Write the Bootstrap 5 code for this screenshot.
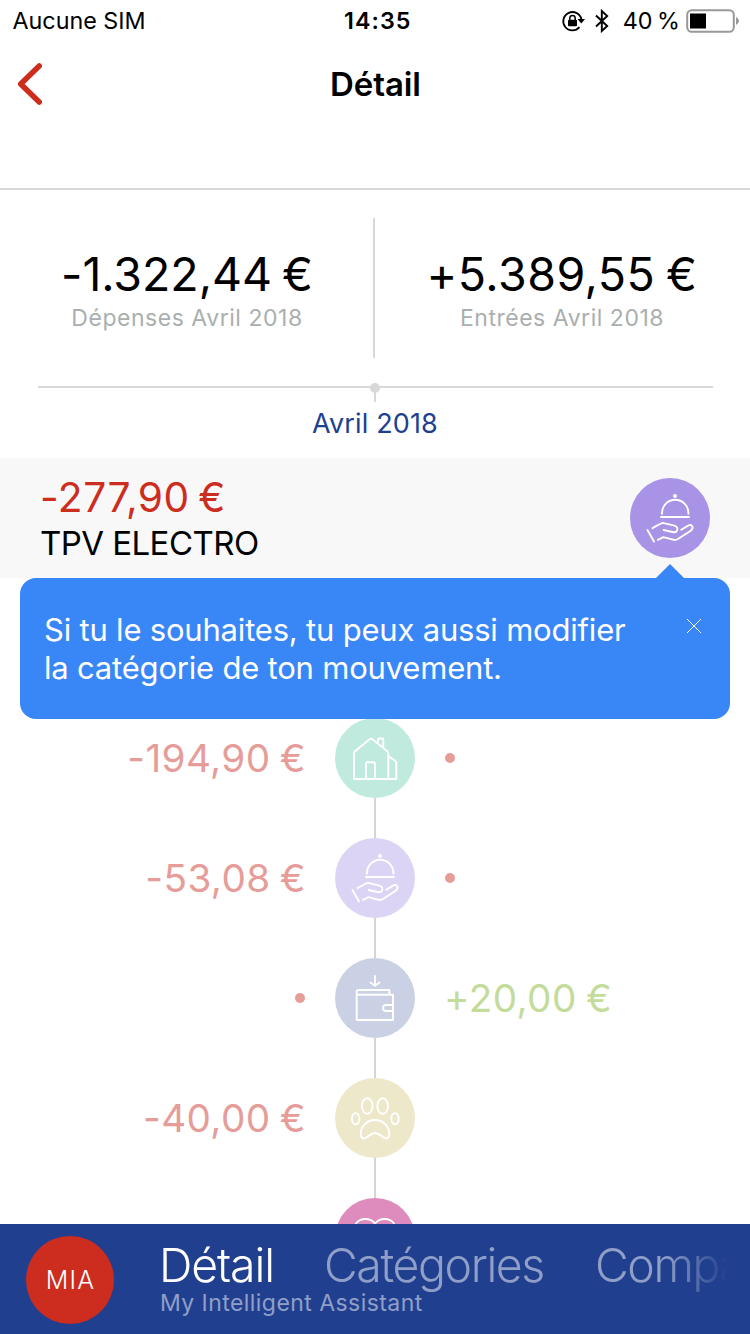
<!DOCTYPE html>
<html lang="fr">
<head>
<meta charset="utf-8">
<meta name="viewport" content="width=device-width, initial-scale=1">
<title>Détail</title>
<link href="https://cdn.jsdelivr.net/npm/bootstrap@5.3.0/dist/css/bootstrap.min.css" rel="stylesheet">
<style>
  body { font-family: Inter, "Liberation Sans", sans-serif; color: #000; background: #fff; }
  .screen { width: 750px; height: 1334px; }
  .ico { fill: none; stroke: #fff; stroke-width: 1.9; stroke-linecap: round; stroke-linejoin: round; }

  .status { height: 41px; font-size: 23.3px; line-height: 41px; padding: 0 10px 0 12.500px; }
  .status .clock { font-weight: 600; letter-spacing: 1px; padding-left: 3px; }
  .status .level { letter-spacing: 0; word-spacing: -2px; }
  .status > * { flex: 1 1 0; }
  .battery { width: 54px; height: 24px; margin-left: 6px; }

  .titlebar { height: 149px; border-bottom: 2px solid #d8d8d8; }
  .titlebar .back { width: 30px; margin-left: 15px; }
  .titlebar .bar-row { height: 85px; }
  .titlebar h1 { font-size: 33px; line-height: 40px; font-weight: 600; letter-spacing: -.1px; padding-right: 44px; }

  .totals { height: 196px; padding-top: 28px; }
  .totals .split { width: 2px; height: 140px; background: #d8d8d8; margin: 0 -1px; }
  .totals .total { width: 374px; padding-top: 28px; }
  .sum { font-size: 46.5px; line-height: 56px; word-spacing: -3px; }
  .sum.spent { letter-spacing: -.05px; }
  .sum.earned { letter-spacing: .5px; }
  .caption-text { font-size: 23px; line-height: 32px; color: #a9afae; letter-spacing: .53px; }

  .month { height: 72px; }
  .month .rule { height: 2px; background: #d8d8d8; margin: 0 37px 0 38px; }
  .month .knob { width: 10px; height: 10px; top: -3px; left: 370px; background: #d8d8d8; }
  .month .stem { width: 2px; height: 14px; background: #d8d8d8; }
  .month .label { font-size: 27px; line-height: 43px; color: #213f8f; letter-spacing: .14px; }

  .movement { height: 120px; background: #f8f8f8; padding: 0 40px; }
  .movement .amount { font-size: 40.7px; line-height: 47px; color: #cc2d1f; letter-spacing: .5px; word-spacing: -3.500px; }
  .movement .name { font-size: 33px; line-height: 45px; letter-spacing: -.55px; }
  .disc { width: 80px; height: 80px; flex: none; }

  .tip { height: 141px; margin: 0 20px; border-radius: 16px; background: #3986f7; color: #fff; padding: 33px 28px 0 24px; z-index: 2; }
  .tip p { font-size: 31px; line-height: 38px; letter-spacing: -.2px; }
  .tip .arrow { width: 28px; height: 15px; top: -14px; left: 636px; }
  .tip .close-x { width: 16px; height: 16px; margin-top: 7px; }

  .timeline { height: 506px; margin-top: -1px; }
  .entry { height: 80px; font-size: 38.7px; line-height: 80px; color: #e69d99; word-spacing: -2px; letter-spacing: .4px; }
  .entry > .side { width: 335px; flex: none; }
  .entry .out { text-align: right; padding-right: 29px; }
  .entry .in { padding-left: 29px; color: #c4dc9b; }
  .link-line { width: 2px; height: 40px; background: #d5d5d5; margin: 0 auto; }
  .bullet { width: 10px; height: 10px; background: #e69d99; margin: 0 30px; }

  .dock { height: 110px; background: #213f8f; color: #fff; padding: 0 20px 0 26px; z-index: 3; }
  .mia { width: 88px; height: 88px; background: #cc2d1f; font-size: 25px; font-weight: 300; letter-spacing: 1.2px; margin-top: 2px; padding: 2px 0 0 1px; }
  .menu { margin-left: 45px; padding-top: 13px; width: 571px; }
  .tabs { height: 56px; font-size: 46.4px; line-height: 56px; font-weight: 300; letter-spacing: -1.400px;
    -webkit-mask-image: linear-gradient(90deg, #000 505px, transparent 569px); mask-image: linear-gradient(90deg, #000 505px, transparent 569px); }
  .tabs span { color: #909fc7; width: 271px; flex: none; }
  .tabs .current { color: #fff; letter-spacing: -1.1px; width: 165px; }
  .tagline { font-size: 23px; line-height: 28px; color: #909fc7; letter-spacing: .44px; margin: -4px 0 0 1px; }
</style>
</head>
<body>
<div class="screen d-flex flex-column overflow-hidden position-relative">

  <div class="status d-flex align-items-center flex-shrink-0">
    <span>Aucune SIM</span>
    <span class="clock text-center">14:35</span>
    <div class="d-flex align-items-center justify-content-end">
      <svg width="24" height="24" viewBox="0 0 24 24" class="me-2">
        <path d="M18.500 18.200A9.200 9.200 0 1 1 20.500 10.500" fill="none" stroke="#000" stroke-width="1.800"/>
        <path d="M16.500 10h7.500l-3.700 4.500z"/>
        <rect x="7" y="10.700" width="9" height="6.500" rx="1"/>
        <path d="M8.800 11.500V9.200a2.700 2.700 0 0 1 5.400 0v2.300" fill="none" stroke="#000" stroke-width="1.500"/>
      </svg>
      <svg width="18" height="24" viewBox="0 0 18 24" class="me-2">
        <path d="M3 6.500 14.200 17 8.800 22V2l5.400 5L3 17.500" fill="none" stroke="#000" stroke-width="1.900"/>
      </svg>
      <span class="level ms-1">40 %</span>
      <svg class="battery" viewBox="0 0 54 24">
        <rect x="1.200" y="1.200" width="46.600" height="21.600" rx="4.500" fill="#fff" stroke="#999" stroke-width="2"/>
        <rect x="4" y="4.500" width="16" height="15"/>
        <path d="M50 8q3 1.500 3 4t-3 4z" fill="#999"/>
      </svg>
    </div>
  </div>

  <header class="titlebar flex-shrink-0">
    <div class="bar-row d-flex align-items-center">
      <svg class="back" height="46" viewBox="0 0 30 46"><path d="M24.200 5 5.700 23 24.200 41" fill="none" stroke="#cc2d1f" stroke-width="5.500" stroke-linecap="round" stroke-linejoin="round"/></svg>
      <h1 class="flex-grow-1 text-center m-0">Détail</h1>
    </div>
  </header>

  <section class="totals d-flex flex-shrink-0">
    <div class="total text-center">
      <div class="sum spent">-1.322,44 €</div>
      <div class="caption-text">Dépenses Avril 2018</div>
    </div>
    <div class="split"></div>
    <div class="total text-center flex-grow-1">
      <div class="sum earned">+5.389,55 €</div>
      <div class="caption-text">Entrées Avril 2018</div>
    </div>
  </section>

  <section class="month position-relative flex-shrink-0">
    <div class="rule"></div>
    <div class="knob rounded-circle position-absolute"></div>
    <div class="stem mx-auto"></div>
    <div class="label text-center">Avril 2018</div>
  </section>

  <section class="movement d-flex align-items-center justify-content-between flex-shrink-0">
    <div class="mt-1">
      <div class="amount">-277,90 €</div>
      <div class="name">TPV ELECTRO</div>
    </div>
    <svg class="disc" viewBox="0 0 80 80">
      <circle cx="40" cy="40" r="40" fill="#a993e6"/>
      <g id="serving" class="ico">
        <circle cx="45" cy="18" r="2" fill="#fff" stroke="none"/>
        <path d="M32 35.800V35a13.200 13.200 0 0 1 26.400 0v.800M31 39h28M17.500 52 24 63.500M22.500 50.200c3-1.800 6.500-4.200 10.200-5.400l10.800 2.600c2.600.600 3.900 1.900 3.900 3.600 0 2.200-1.500 3.500-3.900 3.200l-9.800-2.200M51.300 51.800l7.200-4.400c3-1.600 5.400 1.600 3.100 4.400-.500.600-1 1-1.600 1.400L47.500 61.300c-1.200.7-2.300.8-3.700.5L33.500 59.200l-5.600 2.600"/>
      </g>
    </svg>
  </section>

  <div class="tip position-relative d-flex justify-content-between align-items-start flex-shrink-0">
    <svg class="arrow position-absolute" viewBox="0 0 28 15"><path d="M14 0 28 14v1H0v-1z" fill="#3986f7"/></svg>
    <p class="m-0">Si tu le souhaites, tu peux aussi modifier<br>la catégorie de ton mouvement.</p>
    <svg class="close-x" viewBox="0 0 16 16"><path d="M1 1l14 14M15 1 1 15" stroke="#fff" stroke-width="1"/></svg>
  </div>

  <main class="timeline flex-shrink-0">
    <div class="entry d-flex align-items-center">
      <div class="side out">-194,90 €</div>
      <svg class="disc" viewBox="0 0 80 80">
        <circle cx="40" cy="40" r="40" fill="#c0eadd"/>
        <path class="ico" d="M19 61V35.500q0-1.500 1-2.200L34.300 21.500q1.700-1.300 3.400 0L52.300 33.300q1 .7 1 2.200V61zM43 24.500v-3q0-1 1-1h3.300q1 0 1 1v7M53.300 38l7 5q1 .7 1 2V61h-8M31 61V45.800q0-1.500 1.500-1.500h6q1.500 0 1.500 1.500V61"/>
      </svg>
      <div class="side"><div class="bullet rounded-circle"></div></div>
    </div>
    <div class="link-line"></div>
    <div class="entry d-flex align-items-center">
      <div class="side out">-53,08 €</div>
      <svg class="disc" viewBox="0 0 80 80">
        <circle cx="40" cy="40" r="40" fill="#dbd4f5"/>
        <use href="#serving"/>
      </svg>
      <div class="side"><div class="bullet rounded-circle"></div></div>
    </div>
    <div class="link-line"></div>
    <div class="entry d-flex align-items-center">
      <div class="side d-flex justify-content-end"><div class="bullet rounded-circle"></div></div>
      <svg class="disc" viewBox="0 0 80 80">
        <circle cx="40" cy="40" r="40" fill="#cbd1e4"/>
        <path class="ico" d="M40 18v9.500M35.500 24.500 40 27.700l4.500-3.200M54.300 36v-4H23.500q-1.800 0-1.800 1.800V62H58V36.700H22M58 47h-7a3 3 0 0 0 0 6h7"/>
      </svg>
      <div class="side in">+20,00 €</div>
    </div>
    <div class="link-line"></div>
    <div class="entry d-flex align-items-center">
      <div class="side out">-40,00 €</div>
      <svg class="disc" viewBox="0 0 80 80">
        <circle cx="40" cy="40" r="40" fill="#eee8cb"/>
        <g class="ico">
          <ellipse cx="32.300" cy="28" rx="5.300" ry="7.700"/><ellipse cx="47.700" cy="28" rx="5.300" ry="7.700"/>
          <ellipse cx="20.700" cy="40.700" rx="3.700" ry="5.600"/><ellipse cx="60" cy="40.700" rx="3.700" ry="5.600"/>
          <path d="M40 42c-8 0-14.300 6.500-14.300 14 0 4 2.600 5.200 5.300 3.800 3.200-1.900 5.300-4.800 9-4.800s5.800 2.900 9 4.800c2.700 1.400 5.300.2 5.300-3.800 0-7.500-6.300-14-14.300-14z"/>
        </g>
      </svg>
      <div class="side"></div>
    </div>
    <div class="link-line"></div>
    <div class="entry d-flex align-items-center">
      <div class="side out">-27,27 €</div>
      <svg class="disc" viewBox="0 0 80 80">
        <circle cx="40" cy="40" r="40" fill="#de8cbe"/>
        <path class="ico" d="M40 25.500c-5-6-14.500-6-19 0-5.500 9 3 20 19 33 16-13 24.500-24 19-33-4.500-6-14-6-19 0z"/>
      </svg>
      <div class="side"></div>
    </div>
  </main>

  <nav class="dock d-flex align-items-center position-relative flex-shrink-0">
    <div class="mia rounded-circle d-flex align-items-center justify-content-center flex-shrink-0">MIA</div>
    <div class="menu overflow-hidden align-self-start">
      <div class="tabs d-flex text-nowrap">
        <span class="current">Détail</span>
        <span>Catégories</span>
        <span>Compa</span>
      </div>
      <div class="tagline">My Intelligent Assistant</div>
    </div>
  </nav>
</div>
<script src="https://cdn.jsdelivr.net/npm/bootstrap@5.3.0/dist/js/bootstrap.bundle.min.js"></script>
</body>
</html>
